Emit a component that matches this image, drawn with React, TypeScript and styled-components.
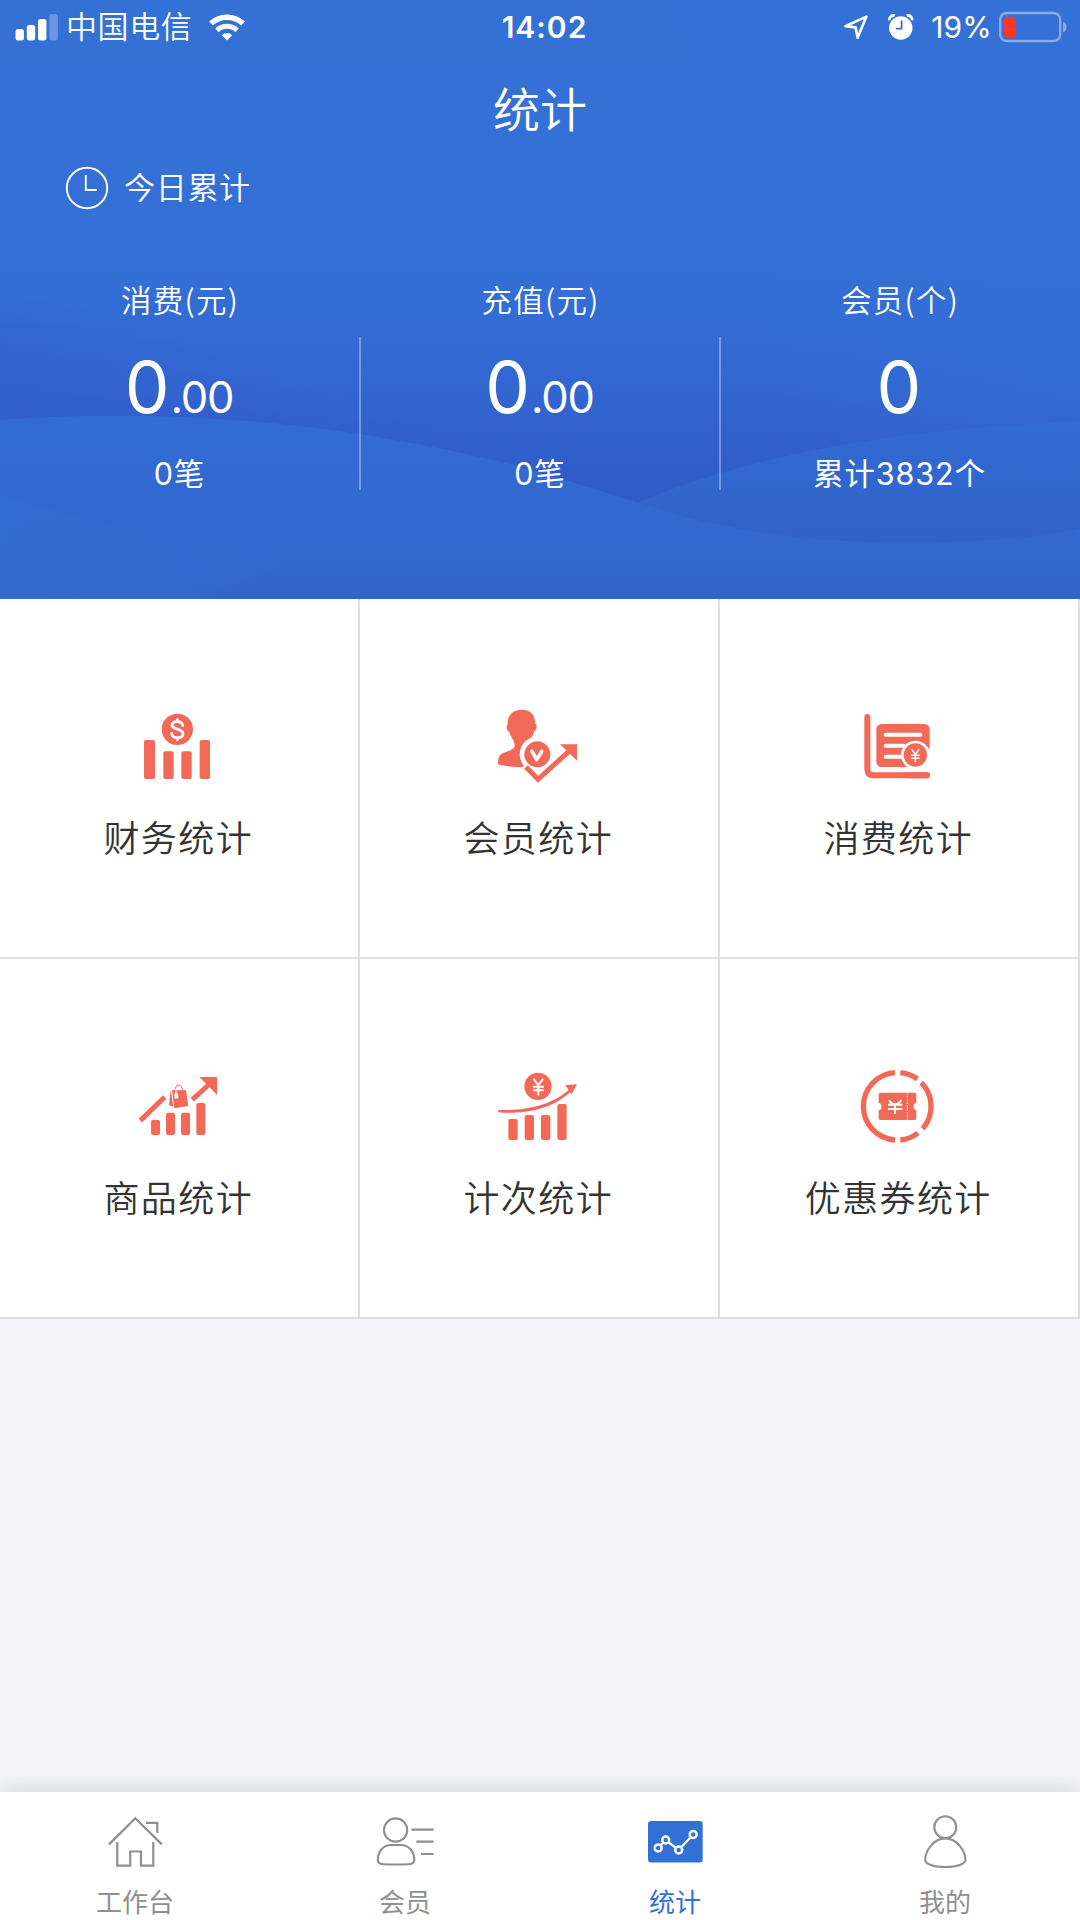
import React from 'react';
import styled, { createGlobalStyle } from 'styled-components';

const CORAL = '#f26a57';
const BLUE = '#3370d6';

const GlobalStyle = createGlobalStyle`
  * { box-sizing: border-box; }
  html, body { margin: 0; padding: 0; }
  body {
    background: #f4f4fa;
    font-family: Inter, 'Noto Sans CJK SC', sans-serif;
  }
  svg { display: block; flex: none; }
`;

const Screen = styled.div`
  width: 1080px;
  height: 1920px;
  display: flex;
  flex-direction: column;
  overflow: hidden;
  background: #f4f4fa;
`;

const Header = styled.header`
  position: relative;
  isolation: isolate;
  height: 599px;
  flex: none;
  color: #fff;
  display: flex;
  flex-direction: column;
`;

const Backdrop = styled.svg`
  position: absolute;
  inset: 0;
  z-index: -1;
`;

const StatusBar = styled.div`
  height: 54px;
  padding: 0 13px 0 15px;
  display: grid;
  grid-template-columns: 1fr auto 1fr;
  align-items: center;
  font-size: 31px;
  line-height: 54px;
`;

const StatusGroup = styled.div<{ $end?: boolean }>`
  display: flex;
  align-items: center;
  justify-content: ${(p) => (p.$end ? 'flex-end' : 'flex-start')};
`;

const Carrier = styled.span`
  margin: 0 16px 0 7px;
  font-weight: 350;
  letter-spacing: 0.6px;
`;

const Time = styled.span`
  font-weight: 600;
  font-size: 30px;
  letter-spacing: 1px;
  padding-left: 7px;
`;

const Percent = styled.span`
  font-size: 30px;
  letter-spacing: 0.2px;
  margin: 0 7px 0 17px;
`;

const Title = styled.h1`
  margin: 21px 0 0;
  height: 70px;
  line-height: 70px;
  font-size: 47px;
  font-weight: 350;
  text-align: center;
`;

const Today = styled.div`
  display: flex;
  align-items: center;
  height: 46px;
  margin-top: 20px;
  padding-left: 65px;
  gap: 15px;
  font-size: 31px;
  font-weight: 350;
  letter-spacing: 0.7px;
`;

const TodayLabel = styled.span`
  height: 46px;
  line-height: 46px;
`;

const Stats = styled.div`
  display: grid;
  grid-template-columns: 361px 360px 359px;
  margin-top: 65px;
`;

const Stat = styled.div`
  display: flex;
  flex-direction: column;
  align-items: center;
`;

const StatLabel = styled.div`
  height: 46px;
  line-height: 46px;
  padding-right: 1px;
  font-size: 30.5px;
  font-weight: 350;
  letter-spacing: 1.3px;
  font-family: 'Noto Sans CJK SC', sans-serif;
`;

const StatBody = styled.div<{ $divider?: boolean }>`
  width: 100%;
  height: 153px;
  margin-top: 15px;
  border-right: 2px solid ${(p) => (p.$divider ? 'rgba(255,255,255,.34)' : 'transparent')};
  display: flex;
  flex-direction: column;
  align-items: center;
`;

const Amount = styled.div`
  display: flex;
  align-items: baseline;
  gap: 1px;
  height: 84px;
  margin-top: 8px;
  padding-right: 1px;
  line-height: 84px;
  font-size: 71px;
  white-space: nowrap;
`;

const Cents = styled.span`
  font-size: 43.5px;
  letter-spacing: -1.2px;
`;

const StatNote = styled.div`
  height: 46px;
  line-height: 46px;
  margin-top: 22px;
  font-size: 30.5px;
  font-weight: 370;
  letter-spacing: 0.9px;
`;

const Menu = styled.main`
  display: grid;
  grid-template-columns: repeat(3, 360px);
  grid-auto-rows: 360px;
  flex: none;
`;

const MenuItem = styled.div`
  background: #fff;
  border-right: 2px solid #dedee0;
  border-bottom: 2px solid #dedee0;
  display: flex;
  flex-direction: column;
  align-items: center;
  padding-top: 91px;
`;

const MenuGlyph = styled.svg`
  margin-left: 2px;
`;

const MenuLabel = styled.div`
  height: 50px;
  line-height: 50px;
  margin-top: 14px;
  padding-right: 1.5px;
  font-size: 36px;
  font-weight: 350;
  letter-spacing: 1.4px;
  color: #333;
`;

const TabBar = styled.nav`
  margin-top: auto;
  height: 128px;
  flex: none;
  background: #fff;
  box-shadow: 0 0 22px rgba(40, 40, 60, 0.18);
  display: grid;
  grid-template-columns: repeat(4, 270px);
`;

const Tab = styled.div<{ $active?: boolean }>`
  display: flex;
  flex-direction: column;
  align-items: center;
  padding-top: 16px;
  color: ${(p) => (p.$active ? BLUE : '#8f8f8f')};
`;

const TabLabel = styled.div`
  height: 36px;
  line-height: 36px;
  margin-top: 13px;
  font-size: 26px;
`;

const Waves = () => (
  <Backdrop width="1080" height="599" viewBox="0 0 1080 599">
    <defs>
      <linearGradient id="sky" x1="0" y1="0" x2="0" y2="1">
        <stop offset="0" stopColor="#3471d5" />
        <stop offset="0.43" stopColor="#3470d7" />
        <stop offset="0.64" stopColor="#3266d1" />
        <stop offset="0.83" stopColor="#305ac8" />
      </linearGradient>
      <linearGradient id="glow" gradientUnits="userSpaceOnUse" x1="1080" y1="240" x2="800" y2="430">
        <stop offset="0" stopColor="#3470d7" stopOpacity="0.6" />
        <stop offset="1" stopColor="#3470d7" stopOpacity="0" />
      </linearGradient>
      <linearGradient id="dusk" gradientUnits="userSpaceOnUse" x1="60" y1="425" x2="100" y2="310">
        <stop offset="0" stopColor="#305ac8" stopOpacity="0.5" />
        <stop offset="1" stopColor="#305ac8" stopOpacity="0" />
      </linearGradient>
      <linearGradient id="front" x1="0" y1="0" x2="0" y2="1">
        <stop offset="0" stopColor="#326cd3" />
        <stop offset="0.6" stopColor="#3268d0" />
        <stop offset="1" stopColor="#3165cc" />
      </linearGradient>
      <linearGradient id="back" gradientUnits="userSpaceOnUse" x1="0" y1="423" x2="0" y2="540">
        <stop offset="0" stopColor="#326bd2" />
        <stop offset="1" stopColor="#3062c9" />
      </linearGradient>
      <linearGradient id="left" x1="0" y1="0" x2="1" y2="0">
        <stop offset="0" stopColor="#326dd2" />
        <stop offset="1" stopColor="#326dd2" stopOpacity="0" />
      </linearGradient>
    </defs>
    <rect width="1080" height="599" fill="url(#sky)" />
    <rect width="1080" height="599" fill="url(#dusk)" />
    <rect width="1080" height="599" fill="url(#glow)" />
    <path d="M600 520L634 504C720 468 850 430 1080 422V599H600Z" fill="url(#back)" />
    <path
      d="M0 420C120 411 240 416 359 434C415 443 465 453 510 464C575 482 640 504 689 518C760 536 840 543 916 543C980 542 1035 538 1080 529V599H0Z"
      fill="url(#front)"
    />
    <path d="M0 495C80 518 170 548 340 548C280 565 220 590 200 599H0Z" fill="url(#left)" opacity="0.5" />
  </Backdrop>
);

const Signal = () => (
  <svg width="44" height="28" viewBox="15 12 44 28" fill="#fff">
    <rect x="15.5" y="28" width="8.4" height="11.5" rx="2.5" />
    <rect x="26.8" y="24" width="8.4" height="15.5" rx="2.5" />
    <rect x="38" y="18" width="8.4" height="21.5" rx="2.5" />
    <rect x="49.4" y="13" width="8.4" height="26.5" rx="2.5" opacity=".27" />
  </svg>
);

const Wifi = () => (
  <svg width="38" height="28" viewBox="208 12 38 28">
    <path d="M211 22.5a23.5 23.5 0 0 1 32 0" fill="none" stroke="#fff" strokeWidth="5.6" />
    <path d="M217 29.3a14.7 14.7 0 0 1 20 0" fill="none" stroke="#fff" strokeWidth="5" />
    <path d="M227 39.5l-5.2-5.3a7.5 7.5 0 0 1 10.4 0z" fill="#fff" />
  </svg>
);

const Location = () => (
  <svg width="26" height="26" viewBox="843 14 26 26">
    <path
      d="M866.4 16.6L845.5 26.2L855.6 27.4L857.6 37.8Z"
      fill="none"
      stroke="#fff"
      strokeWidth="2.6"
      strokeLinejoin="round"
    />
  </svg>
);

const AlarmGlyph = styled.svg`
  margin-left: 19px;
`;

const Alarm = () => (
  <AlarmGlyph width="26" height="26" viewBox="888 13 26 26">
    <circle cx="900.8" cy="27" r="11.7" fill="#fff" />
    <path d="M889.5 19.2a4 4 0 0 1 5.2-4.5M912 19.2a4 4 0 0 0-5.2-4.5" stroke="#fff" strokeWidth="2.8" fill="none" />
    <path d="M901.6 19.5V27.6H896" stroke={BLUE} strokeWidth="1.8" fill="none" />
  </AlarmGlyph>
);

const Battery = () => (
  <svg width="68" height="32" viewBox="999 10 68 32">
    <rect x="1000.2" y="12" width="60" height="28" rx="6.5" fill="none" stroke="#fff" strokeOpacity=".42" strokeWidth="2.4" />
    <rect x="1004" y="16" width="11.2" height="20" rx="2" fill="#ff3726" />
    <path d="M1063 20.5c4.6 2 4.6 9 0 11z" fill="#fff" fillOpacity=".42" />
  </svg>
);

const Clock = () => (
  <svg width="44" height="44" viewBox="65 166 44 44" fill="none" stroke="#fff" strokeWidth="1.9">
    <circle cx="87" cy="188" r="20.2" />
    <path d="M85.8 175V190H97" />
  </svg>
);

const MenuIcon = ({ children }: { children: React.ReactNode }) => (
  <MenuGlyph width="120" height="110" viewBox="0 0 360 330" fill={CORAL}>
    {children}
  </MenuGlyph>
);

const Yen = ({ x, y, s, w }: { x: number; y: number; s: number; w: number }) => (
  <path
    transform={`translate(${x} ${y}) scale(${s})`}
    d="M-13 -22L0 -4L13 -22M0 -4V24M-14 0H14M-14 11H14"
    fill="none"
    stroke="#fff"
    strokeWidth={w}
    strokeLinecap="round"
  />
);

const FinanceIcon = () => (
  <MenuIcon>
    <circle cx="172" cy="118" r="47" />
    <rect x="72" y="150" width="33" height="117" rx="6" />
    <rect x="130" y="184" width="31" height="83" rx="6" />
    <rect x="184" y="184" width="31" height="83" rx="6" />
    <rect x="239" y="150" width="31" height="117" rx="6" />
    <path
      d="M188 107C187 98 181 95 172 95C162 95 156 99 156 106C156 121 189 114 189 131C189 139 182 143 172 143C162 143 156 138 155 130M172 89V95M172 143V149"
      fill="none"
      stroke="#fff"
      strokeWidth="8.5"
      strokeLinecap="round"
    />
  </MenuIcon>
);

const MemberStatsIcon = () => (
  <MenuIcon>
    <path d="M125 59C153 59 166 77 166 101C173 108 170 121 163 124C160 137 151 145 149 152L160 168L142 231C110 232 80 230 54 223C54 201 59 194 69 189C84 183 106 180 104 163C102 150 91 138 87 125C79 121 78 108 83 102C82 77 97 59 125 59Z" />
    <circle cx="172" cy="193" r="53" fill="#fff" />
    <path d="M116 236L139 224L174 263L239 201L262 182V235L174 300Z" fill="#fff" />
    <circle cx="172" cy="193" r="39" />
    <path d="M138 231L174 268L270 181" fill="none" stroke={CORAL} strokeWidth="15" />
    <path d="M240 163H291V212Z" />
    <path d="M156 184L170 209L185 184" fill="none" stroke="#fff" strokeWidth="11" strokeLinecap="round" strokeLinejoin="round" />
  </MenuIcon>
);

const ConsumeIcon = () => (
  <MenuIcon>
    <path
      d="M82 81V238Q82 256 100 256H261"
      fill="none"
      stroke={CORAL}
      strokeWidth="18"
      strokeLinecap="round"
    />
    <rect x="109" y="102" width="160" height="129" rx="16" />
    <path d="M137 134H241M137 167H190M137 200H190" stroke="#fff" strokeWidth="12" strokeLinecap="round" />
    <circle cx="226" cy="195" r="43" fill="#fff" />
    <path d="M255 165L280 188V245H205L226 225Z" fill="#fff" />
    <path d="M200 256H261" stroke={CORAL} strokeWidth="18" strokeLinecap="round" />
    <circle cx="226" cy="195" r="35" />
    <Yen x={226} y={196} s={0.78} w={6} />
  </MenuIcon>
);

const GoodsIcon = () => (
  <MenuIcon>
    <path d="M61 212L134 141M217 149L272 99" fill="none" stroke={CORAL} strokeWidth="15" />
    <path d="M238 81H291V134Z" />
    <rect x="93" y="210" width="27" height="45" rx="6" />
    <rect x="138" y="188" width="27" height="67" rx="6" />
    <rect x="183" y="188" width="27" height="67" rx="6" />
    <rect x="229" y="159" width="27" height="96" rx="6" />
    <path d="M152 120L160 170L147 165ZM156 120L198 121L205 168L163 175Z" />
    <path d="M166 121V115Q168 105 177 105Q186 106 188 121" fill="none" stroke={CORAL} strokeWidth="3" />
    <path d="M168 117V130" stroke="#fff" strokeWidth="3" />
    <path d="M163 132L168 127L174 131L175 145L164 146Z" fill="#fff" />
  </MenuIcon>
);

const CountIcon = () => (
  <MenuIcon>
    <circle cx="174" cy="109" r="41" />
    <Yen x={175} y={110} s={1} w={6} />
    <path d="M55 180C135 183 215 168 272 115L276 121C220 178 135 194 55 187Z" />
    <path d="M256 106L291 103L275 133Z" />
    <rect x="85" y="207" width="28" height="63" rx="6" />
    <rect x="134" y="195" width="28" height="75" rx="6" />
    <rect x="183" y="195" width="28" height="75" rx="6" />
    <rect x="232" y="162" width="28" height="108" rx="6" />
  </MenuIcon>
);

const CouponIcon = () => (
  <MenuIcon>
    <path
      d="M165 68A101.2 101.2 0 0 0 165 270M181 68A101.5 101.5 0 0 1 232 87M244 98A101.5 101.5 0 0 1 248 236M234 249A101.5 101.5 0 0 1 181 270"
      fill="none"
      stroke={CORAL}
      strokeWidth="16"
    />
    <path d="M121 128H224Q229 128 229 134V158A12 12 0 0 0 229 181V204Q229 210 224 210H121Q116 210 116 204V181A12 12 0 0 0 116 158V134Q116 128 121 128Z" />
    <path d="M202 130V210" stroke="#fff" strokeWidth="3" strokeDasharray="4 3" />
    <path d="M148 150Q151 161 165 163Q180 161 183 150M165 163V191M144 164H187M144 177H187" fill="none" stroke="#fff" strokeWidth="6" />
  </MenuIcon>
);

const HomeIcon = () => (
  <svg width="70" height="64" viewBox="100 1808 70 64" fill="none" stroke="currentColor" strokeWidth="2.2">
    <path d="M109 1844.4L135.3 1818.2L161.8 1844.4M146 1822.8H157.3V1833M117.3 1842V1865.6H130.2V1851.5H141V1865.6H153.3V1842" />
  </svg>
);

const MembersIcon = () => (
  <svg width="70" height="64" viewBox="370 1808 70 64" fill="none" stroke="currentColor" strokeWidth="2.1">
    <circle cx="395.6" cy="1830" r="11.6" />
    <path d="M391 1845H401C409 1845 414.3 1852 414.3 1860C414.3 1863 412.5 1864 409 1864.2Q396 1864.8 383 1864.2C379.5 1864 377.8 1863 377.8 1860C377.8 1852 383 1845 391 1845ZM411.4 1829.6H433.7M416.3 1841.6H433.7M421 1854H433.7" />
  </svg>
);

const StatsIcon = () => (
  <svg width="70" height="64" viewBox="640 1808 70 64">
    <rect x="648" y="1821" width="54.7" height="41.6" rx="3" fill={BLUE} />
    <path d="M658.2 1848L665.7 1840L678.7 1850L693.2 1834.5" fill="none" stroke="#fff" strokeWidth="2.4" />
    <g fill={BLUE} stroke="#fff" strokeWidth="2.5">
      <circle cx="658.2" cy="1848" r="3.5" />
      <circle cx="665.7" cy="1840" r="3.5" />
      <circle cx="678.7" cy="1850" r="3.5" />
      <circle cx="693.2" cy="1834.5" r="3.5" />
    </g>
  </svg>
);

const MineIcon = () => (
  <svg width="70" height="64" viewBox="910 1808 70 64" fill="none" stroke="currentColor" strokeWidth="2.1">
    <circle cx="945.3" cy="1827.3" r="11" />
    <path d="M945.3 1838.4C957 1838.4 965.4 1851 965.4 1860C965.4 1864 957 1867 945.3 1867C933.5 1867 925.2 1864 925.2 1860C925.2 1851 933.5 1838.4 945.3 1838.4Z" />
  </svg>
);

const stats = [
  { label: '消费(元)', whole: '0', cents: '.00', note: '0笔' },
  { label: '充值(元)', whole: '0', cents: '.00', note: '0笔' },
  { label: '会员(个)', whole: '0', cents: '', note: '累计3832个' },
];

const menu = [
  { label: '财务统计', Icon: FinanceIcon },
  { label: '会员统计', Icon: MemberStatsIcon },
  { label: '消费统计', Icon: ConsumeIcon },
  { label: '商品统计', Icon: GoodsIcon },
  { label: '计次统计', Icon: CountIcon },
  { label: '优惠券统计', Icon: CouponIcon },
];

const tabs = [
  { label: '工作台', Icon: HomeIcon },
  { label: '会员', Icon: MembersIcon },
  { label: '统计', Icon: StatsIcon, active: true },
  { label: '我的', Icon: MineIcon },
];

export default function App() {
  return (
    <Screen>
      <GlobalStyle />
      <Header>
        <Waves />
        <StatusBar>
          <StatusGroup>
            <Signal />
            <Carrier>中国电信</Carrier>
            <Wifi />
          </StatusGroup>
          <Time>14:02</Time>
          <StatusGroup $end>
            <Location />
            <Alarm />
            <Percent>19%</Percent>
            <Battery />
          </StatusGroup>
        </StatusBar>
        <Title>统计</Title>
        <Today>
          <Clock />
          <TodayLabel>今日累计</TodayLabel>
        </Today>
        <Stats>
          {stats.map((s, i) => (
            <Stat key={s.label}>
              <StatLabel>{s.label}</StatLabel>
              <StatBody $divider={i < 2}>
                <Amount>
                  {s.whole}
                  {s.cents && <Cents>{s.cents}</Cents>}
                </Amount>
                <StatNote>{s.note}</StatNote>
              </StatBody>
            </Stat>
          ))}
        </Stats>
      </Header>
      <Menu>
        {menu.map(({ label, Icon }) => (
          <MenuItem key={label}>
            <Icon />
            <MenuLabel>{label}</MenuLabel>
          </MenuItem>
        ))}
      </Menu>
      <TabBar>
        {tabs.map(({ label, Icon, active }) => (
          <Tab key={label} $active={active}>
            <Icon />
            <TabLabel>{label}</TabLabel>
          </Tab>
        ))}
      </TabBar>
    </Screen>
  );
}
